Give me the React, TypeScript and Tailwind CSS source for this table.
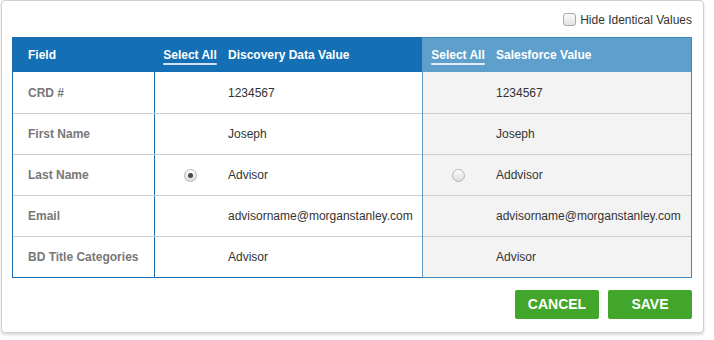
import React from 'react'

type Row = {
    field: string
    discovery: string
    salesforce: string
    radio?: boolean
}

const rows: Row[] = [
    { field: 'CRD #', discovery: '1234567', salesforce: '1234567' },
    { field: 'First Name', discovery: 'Joseph', salesforce: 'Joseph' },
    { field: 'Last Name', discovery: 'Advisor', salesforce: 'Addvisor', radio: true },
    {
        field: 'Email',
        discovery: 'advisorname@morganstanley.com',
        salesforce: 'advisorname@morganstanley.com',
    },
    { field: 'BD Title Categories', discovery: 'Advisor', salesforce: 'Advisor' },
]

function Radio({ checked }: { checked: boolean }) {
    return (
        <div className="flex h-[13px] w-[13px] items-center justify-center rounded-full border border-[#b4b4b4] bg-gradient-to-b from-[#fdfdfd] to-[#dcdcdc]">
            {checked && <div className="h-[5px] w-[5px] rounded-full bg-[#4a4a4a]"></div>}
        </div>
    )
}

function SelectAll() {
    return (
        <span className="cursor-pointer underline decoration-white/80 decoration-2 underline-offset-[4px]">
            Select All
        </span>
    )
}

export default function App() {
    return (
        <div className="h-[340px] w-[714px] bg-white font-['Liberation_Sans',Arial,sans-serif] text-[12px]">
            <div className="ml-px w-[703px] rounded-[4px] border border-[#cfcfcf] bg-white px-[10px] pb-[13px] shadow-[0_2px_3px_rgba(0,0,0,0.15)]">
                <div className="flex h-[36px] items-center justify-end pr-[1px] pt-px">
                    <label className="flex items-center gap-[4px] text-[12px] text-[#333]">
                        <span className="h-[13px] w-[13px] rounded-[3px] border border-[#a9a9a9] bg-gradient-to-b from-[#fafafa] to-[#e4e4e4]"></span>
                        Hide Identical Values
                    </label>
                </div>

                <div className="flex w-[680px]">
                    {/* left group */}
                    <div className="w-[410px] border border-r-0 border-[#1b6db0]">
                        <div className="flex h-[34px] items-center bg-[#146fb4] font-bold text-white">
                            <div className="w-[141px] pl-[15px]">Field</div>
                            <div className="flex w-[71px] justify-center pl-[1px]">
                                <SelectAll />
                            </div>
                            <div className="pl-[3px]">Discovery Data Value</div>
                        </div>
                        {rows.map((r, i) => (
                            <div
                                key={r.field}
                                className={`flex h-[41px] items-center ${i > 0 ? 'border-t border-[#cdcdcd]' : ''}`}
                            >
                                <div className="flex h-full w-[142px] items-center border-r border-[#1b6db0] pl-[15px] font-bold text-[#777]">
                                    {r.field}
                                </div>
                                <div className="flex w-[70px] justify-center">
                                    {r.radio && <Radio checked />}
                                </div>
                                <div className="pl-[3px] text-[#333]">{r.discovery}</div>
                            </div>
                        ))}
                    </div>

                    {/* right group */}
                    <div className="flex-1 border border-[#3c86c2] border-l-[#5b9bcb]">
                        <div className="flex h-[34px] items-center bg-[#5e9fcb] font-bold text-white">
                            <div className="flex w-[70px] justify-center">
                                <SelectAll />
                            </div>
                            <div className="pl-[3px]">Salesforce Value</div>
                        </div>
                        {rows.map((r, i) => (
                            <div
                                key={r.field}
                                className={`flex h-[41px] items-center bg-[#f3f3f3] ${i > 0 ? 'border-t border-[#cdcdcd]' : ''}`}
                            >
                                <div className="flex w-[70px] justify-center">
                                    {r.radio && <Radio checked={false} />}
                                </div>
                                <div className="pl-[3px] text-[#333]">{r.salesforce}</div>
                            </div>
                        ))}
                    </div>
                </div>

                <div className="mt-[12px] flex justify-end gap-[9px] pr-px">
                    <button className="h-[29px] w-[84px] rounded-[2px] bg-[#42a62a] text-[14px] font-bold text-white">
                        CANCEL
                    </button>
                    <button className="h-[29px] w-[84px] rounded-[2px] bg-[#42a62a] text-[14px] font-bold text-white">
                        SAVE
                    </button>
                </div>
            </div>
        </div>
    )
}
